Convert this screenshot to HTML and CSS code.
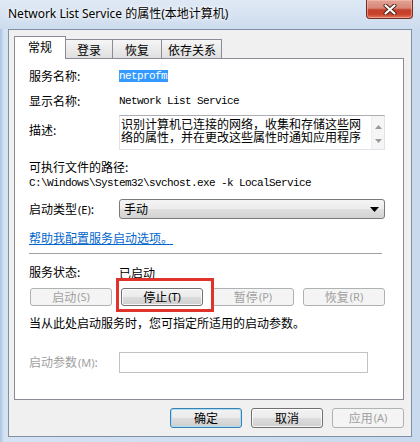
FILE: index.html
```html
<!DOCTYPE html>
<html lang="zh-CN">
<head>
<meta charset="utf-8">
<title>Network List Service 的属性(本地计算机)</title>
<link rel="stylesheet" href="styles.css">
</head>
<body>
<div class="window">
  <div class="titlebar">
    <div class="title">Network List Service 的属性(本地计算机)</div>
    <div class="close">
      <svg width="14" height="11" viewBox="0 0 14 11">
        <path d="M2.5 1.5 L11.5 9.5 M11.5 1.5 L2.5 9.5" stroke="#4a1c14" stroke-width="4" stroke-linecap="round"/>
        <path d="M2.5 1.5 L11.5 9.5 M11.5 1.5 L2.5 9.5" stroke="#ffffff" stroke-width="2.2" stroke-linecap="round"/>
      </svg>
    </div>
  </div>
  <div class="client">
    <div class="tabs">
      <div class="tab tab-active">常规</div>
      <div class="tab">登录</div>
      <div class="tab tab-mid">恢复</div>
      <div class="tab tab-wide">依存关系</div>
    </div>
    <div class="panel">
      <div class="row row-first">
        <div class="label">服务名称:</div>
        <div class="mono"><span class="selected">netprofm</span></div>
      </div>
      <div class="row row-gap9">
        <div class="label">显示名称:</div>
        <div class="mono">Network List Service</div>
      </div>
      <div class="row row-desc">
        <div class="label label-desc">描述:</div>
        <div class="descbox">
          <div class="desctext">
            <div class="descline">识别计算机已连接的网络，收集和存储这些网</div>
            <div class="descline">络的属性，并在更改这些属性时通知应用程序</div>
          </div>
          <div class="scrollbar">
            <svg width="7" height="4" viewBox="0 0 7 4"><path d="M0 4 L3.5 0 L7 4 Z" fill="#9a9a9a"/></svg>
            <svg width="7" height="4" viewBox="0 0 7 4"><path d="M0 0 L3.5 4 L7 0 Z" fill="#9a9a9a"/></svg>
          </div>
        </div>
      </div>
      <div class="line row-gap9">可执行文件的路径:</div>
      <div class="line mono">C:\Windows\System32\svchost.exe -k LocalService</div>
      <div class="row row-startup">
        <div class="label">启动类型<span class="acc">(E)</span>:</div>
        <div class="combo">
          <span>手动</span>
          <svg width="9" height="5" viewBox="0 0 9 5"><path d="M0 0 L9 0 L4.5 5 Z" fill="#000"/></svg>
        </div>
      </div>
      <div class="line link">帮助我配置服务启动选项。</div>
      <div class="separator"></div>
      <div class="row row-status">
        <div class="label">服务状态:</div>
        <div>已启动</div>
      </div>
      <div class="svc-buttons">
        <div class="btn btn-disabled">启动<span class="acc">(S)</span></div>
        <div class="btn">停止<span class="acc">(T)</span></div>
        <div class="btn btn-disabled">暂停<span class="acc">(P)</span></div>
        <div class="btn btn-disabled">恢复<span class="acc">(R)</span></div>
      </div>
      <div class="line row-gap9">当从此处启动服务时，您可指定所适用的启动参数。</div>
      <div class="row row-params">
        <div class="label label-disabled">启动参数<span class="acc">(M)</span>:</div>
        <div class="parambox"></div>
      </div>
      <div class="highlight"></div>
    </div>
    <div class="dlg-buttons">
      <div class="btn dlg-btn btn-default">确定</div>
      <div class="btn dlg-btn">取消</div>
      <div class="btn dlg-btn btn-disabled">应用<span class="acc">(A)</span></div>
    </div>
  </div>
</div>
</body>
</html>
```

FILE: styles.css
```css
html, body {
  margin: 0;
  padding: 0;
}
body {
  width: 420px;
  height: 442px;
  overflow: hidden;
  font-family: "Noto Sans CJK SC", "Noto Sans", sans-serif;
  font-size: 12px;
  color: #000;
}
.window {
  width: 420px;
  height: 442px;
  box-sizing: border-box;
  display: flex;
  flex-direction: column;
  background: linear-gradient(90deg, #a9c3e2 0px, #d4e2f2 4px, #cfdef0 50%, #c9daee 100%);
}
.titlebar {
  height: 29px;
  flex-shrink: 0;
  display: flex;
  justify-content: space-between;
  align-items: flex-start;
  padding-left: 8px;
  background: linear-gradient(180deg, #dfe9f5 0%, #cddcee 100%);
}
.title {
  margin-top: 6px;
  font-family: "Noto Sans", "Noto Sans CJK SC", sans-serif;
  font-size: 12px;
  line-height: 16px;
  color: #000;
  white-space: nowrap;
  text-shadow: 0 0 6px #ffffff, 0 0 3px #ffffff;
}
.close {
  width: 47px;
  height: 19px;
  margin-right: 7px;
  box-sizing: border-box;
  border: 1px solid #6e2f26;
  border-top: none;
  border-radius: 0 0 4px 4px;
  background: linear-gradient(180deg, #e2a496 0%, #d88576 45%, #c2402a 55%, #c9432b 80%, #e07a5e 100%);
  box-shadow: inset 0 0 0 1px rgba(255, 200, 190, 0.5);
  display: flex;
  align-items: center;
  justify-content: center;
}
.client {
  flex: 1;
  margin: 0 8px 5px 8px;
  background: #f0f0f0;
  border: 1px solid #7f8fa4;
  padding: 6px 7px 0 5px;
  display: flex;
  flex-direction: column;
}
.tabs {
  display: flex;
  align-items: flex-end;
  height: 23px;
  margin-bottom: -1px;
}
.tab {
  height: 20px;
  box-sizing: border-box;
  border: 1px solid #898c95;
  border-bottom: none;
  border-left: none;
  padding: 0 11px;
  line-height: 19px;
  font-size: 12px;
  background: linear-gradient(180deg, #f6f6f6 0%, #eaeaea 50%, #dedede 100%);
  white-space: nowrap;
}
.tab-active {
  height: 23px;
  border-left: 1px solid #898c95;
  padding: 0 13px 3px 13px;
  background: #ffffff;
  position: relative;
  z-index: 1;
}
.tab-mid {
  padding: 0 12px;
}
.tab-wide {
  padding: 0 5px 0 6px;
}
.panel {
  position: relative;
  height: 342px;
  box-sizing: border-box;
  border: 1px solid #898c95;
  background: #ffffff;
  padding: 9px 18px 0 14px;
}
.row {
  display: flex;
  align-items: center;
}
.row-first {
  height: 16px;
}
.row-gap9 {
  margin-top: 9px;
}
.label {
  width: 90px;
  flex-shrink: 0;
  line-height: 16px;
  white-space: nowrap;
}
.line {
  line-height: 16px;
  height: 16px;
  white-space: nowrap;
}
.acc {
  font-family: "Noto Sans", sans-serif;
  font-size: 11px;
  margin-left: 1px;
}
.mono {
  font-family: "Liberation Mono", monospace;
  font-size: 11px;
  letter-spacing: -0.6px;
  line-height: 16px;
  white-space: nowrap;
}
.selected {
  background: #3399ff;
  color: #ffffff;
  padding: 0 1px 0 0;
}
.row-desc {
  margin-top: 6px;
  align-items: flex-start;
}
.label-desc {
  margin-top: 7px;
}
.descbox {
  width: 266px;
  height: 35px;
  box-sizing: border-box;
  border: 1px solid #e2e3ea;
  border-top-color: #abadb3;
  display: flex;
  justify-content: space-between;
  background: #ffffff;
}
.desctext {
  padding: 1px 0 0 1px;
  font-size: 12px;
  white-space: nowrap;
}
.descline {
  height: 13px;
  line-height: 13px;
  overflow: visible;
}
.scrollbar {
  width: 13px;
  background: #f5f5f5;
  border-left: 1px solid #ededed;
  display: flex;
  flex-direction: column;
  align-items: center;
  justify-content: space-between;
  padding: 9px 0 6px 0;
  box-sizing: border-box;
}
.row-startup {
  margin-top: 8px;
  height: 20px;
}
.combo {
  width: 266px;
  height: 20px;
  box-sizing: border-box;
  border: 1px solid #7a7a7a;
  border-radius: 3px;
  background: linear-gradient(180deg, #f4f4f4 0%, #ececec 50%, #dfdfdf 50%, #d3d3d3 100%);
  display: flex;
  align-items: center;
  justify-content: space-between;
  padding: 0 5px 0 4px;
  line-height: 16px;
}
.link {
  margin-top: 11px;
  color: #0066cc;
  text-decoration: underline;
}
.separator {
  margin-top: 7px;
  margin-right: 3px;
  height: 1px;
  background: #a0a0a0;
}
.row-status {
  margin-top: 10px;
  height: 16px;
}
.svc-buttons {
  margin-top: 8px;
  display: flex;
  gap: 9px;
  padding-left: 1px;
}
.btn {
  box-sizing: border-box;
  border: 1px solid #707070;
  border-radius: 3px;
  background: linear-gradient(180deg, #f2f2f2 0%, #ebebeb 50%, #dddddd 50%, #cfcfcf 100%);
  box-shadow: inset 0 0 0 1px rgba(255, 255, 255, 0.8);
  display: flex;
  align-items: center;
  justify-content: center;
  white-space: nowrap;
  font-size: 12px;
  line-height: 16px;
}
.svc-buttons .btn {
  width: 82px;
  height: 18px;
}
.btn-disabled {
  border-color: #adb2b5;
  background: #f4f4f4;
  box-shadow: none;
  color: #a0a0a0;
}
.btn-default {
  border-color: #3c7fb1;
  box-shadow: inset 0 0 0 1px #a6dff7;
}
.row-params {
  margin-top: 21px;
}
.label-disabled {
  color: #a0a0a0;
}
.parambox {
  width: 249px;
  height: 21px;
  box-sizing: border-box;
  border: 1px solid #c2c2c2;
  background: #ffffff;
}
.highlight {
  position: absolute;
  left: 101px;
  top: 219px;
  width: 98px;
  height: 34px;
  box-sizing: border-box;
  border: 3px solid #e0332c;
}
.dlg-buttons {
  margin-top: 8px;
  display: flex;
  justify-content: flex-end;
  gap: 9px;
}
.dlg-btn {
  width: 72px;
  height: 20px;
}
```
